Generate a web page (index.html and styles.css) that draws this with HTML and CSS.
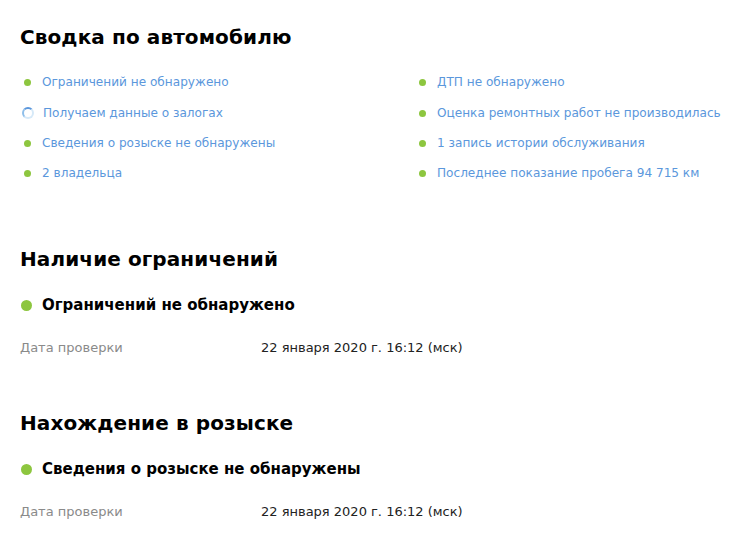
FILE: index.html
```html
<!DOCTYPE html>
<html lang="ru">
<head>
    <meta charset="UTF-8">
    <title>Сводка по автомобилю</title>
    <link rel="stylesheet" href="styles.css">
</head>
<body>
    <!-- Сводка -->
    <div class="section summary">
        <h2>Сводка по автомобилю</h2>
        <div class="summary-grid">
            <ul class="summary-list">
                <li><span class="dot"></span>Ограничений не обнаружено</li>
                <li><span class="spinner"></span>Получаем данные о залогах</li>
                <li><span class="dot"></span>Сведения о розыске не обнаружены</li>
                <li><span class="dot"></span>2 владельца</li>
            </ul>
            <ul class="summary-list">
                <li><span class="dot"></span>ДТП не обнаружено</li>
                <li><span class="dot"></span>Оценка ремонтных работ не производилась</li>
                <li><span class="dot"></span>1 запись истории обслуживания</li>
                <li><span class="dot"></span>Последнее показание пробега 94 715 км</li>
            </ul>
        </div>
    </div>

    <!-- Наличие ограничений -->
    <div class="section">
        <h2>Наличие ограничений</h2>
        <div class="status"><span class="dot big"></span>Ограничений не обнаружено</div>
        <div class="info-row">
            <span class="info-label">Дата проверки</span>
            <span class="info-value">22 января 2020 г. 16:12 (мск)</span>
        </div>
    </div>

    <!-- Нахождение в розыске -->
    <div class="section">
        <h2>Нахождение в розыске</h2>
        <div class="status"><span class="dot big"></span>Сведения о розыске не обнаружены</div>
        <div class="info-row">
            <span class="info-label">Дата проверки</span>
            <span class="info-value">22 января 2020 г. 16:12 (мск)</span>
        </div>
    </div>
</body>
</html>
```

FILE: styles.css
```css
/* Основные стили */
body {
    font-family: "DejaVu Sans", Verdana, sans-serif;
    background-color: #fff;
    margin: 0;
    padding: 0 20px;
    color: #000;
}

h2 {
    font-size: 20px;
    font-weight: bold;
    margin: 0;
    line-height: 30px;
    letter-spacing: 0.1px;
}

/* Секции */
.section {
    padding-top: 22px;
}

.section + .section {
    padding-top: 50px;
}

/* Сводка */
.summary {
    padding-bottom: 6px;
}

.summary h2 {
    margin-bottom: 14px;
}

.summary-grid {
    display: grid;
    grid-template-columns: 395px 1fr;
}

.summary-list {
    list-style: none;
    margin: 0;
    padding: 0;
}

.summary-list li {
    display: flex;
    align-items: center;
    height: 30px;
    font-size: 12.1px;
    color: #5b97dc;
}

.summary-list li:first-child {
    height: 32px;
}

.dot {
    display: inline-block;
    width: 7px;
    height: 7px;
    border-radius: 50%;
    background-color: #8dc63f;
    margin: 0 11px 0 4px;
    flex-shrink: 0;
}

.dot.big {
    width: 11px;
    height: 11px;
    margin: 0 10px 0 1px;
}

.spinner {
    display: inline-block;
    width: 8px;
    height: 8px;
    border: 2px solid #d6e9f8;
    border-top-color: #5b97dc;
    border-left-color: #8fbfea;
    border-radius: 50%;
    margin: 0 9px 0 2px;
    flex-shrink: 0;
}

/* Статус */
.status {
    display: flex;
    align-items: center;
    font-size: 15px;
    font-weight: bold;
    margin-top: 16px;
    height: 30px;
}

.info-row {
    display: flex;
    font-size: 13px;
    margin-top: 18px;
    line-height: 20px;
}

.info-label {
    width: 241px;
    color: #8a8a8a;
}

.info-value {
    color: #222;
}
```
